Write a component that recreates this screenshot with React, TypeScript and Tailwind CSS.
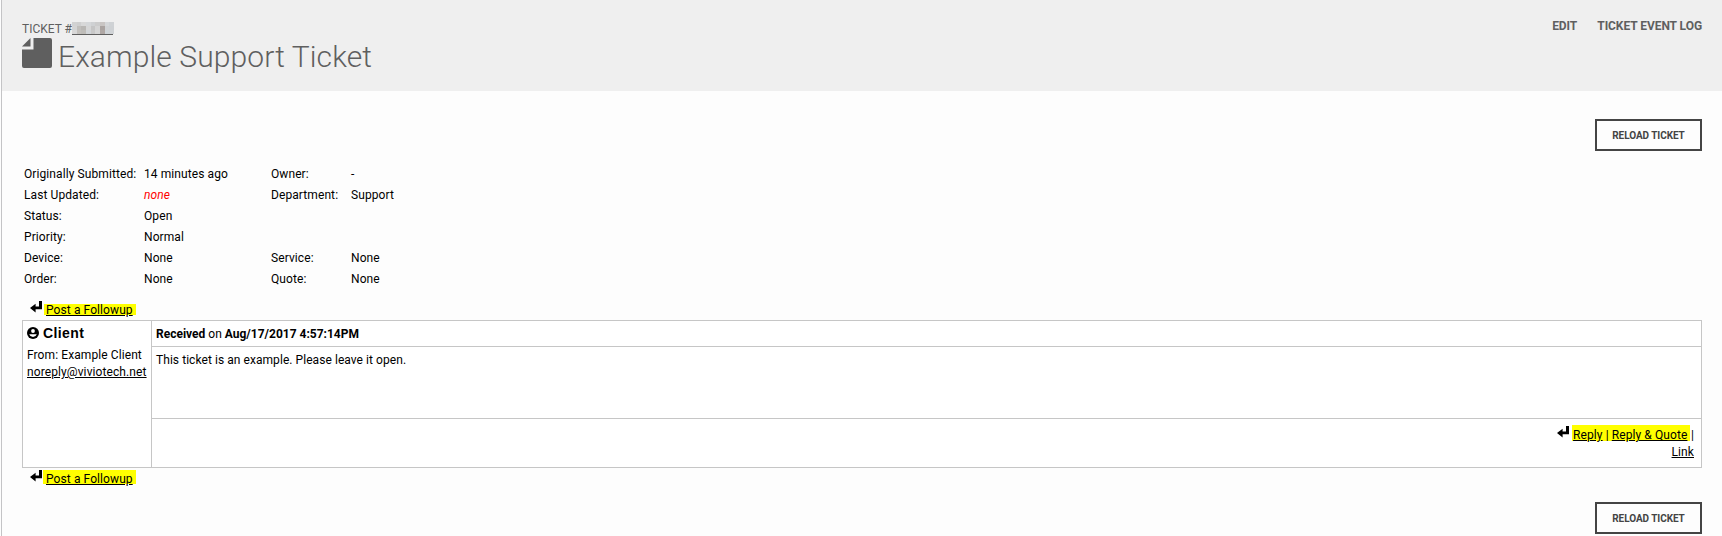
import React from "react";

const cells = [
  ["#d2d2d2", "#cfcfcf", "#d8d8d8", "#d5d7d9", "#cfd1d3", "#cccccc", "#c9c5c3", "#d5d7d9", "#cfd2d5"],
  ["#d4d4d4", "#c1bfbc", "#b9b7b4", "#d6d6d6", "#c5c5c5", "#d4d4d4", "#aaa3a0", "#d0d2d4", "#ced1d4"],
  ["#d8d8d8", "#c4c1bd", "#bfbdb9", "#d2d5d8", "#c9c9c9", "#d6d6d6", "#b0a8a5", "#cfd4d8", "#d0d3d6"],
];

const Arrow = ({ className }: { className: string }) => (
  <svg viewBox="0 0 12 12" className={`h-3 w-3 shrink-0 ${className}`} fill="#000">
    <path d="M9 0H12V8.3H5.6V11.4L0 7L5.6 2.8V5.6H9Z" />
  </svg>
);

const Reload = () => (
  <button className="flex h-8 w-[107px] items-center justify-center border-2 border-[#444] pt-px text-[10px] font-bold tracking-[-0.06px] whitespace-nowrap text-[#444]">
    RELOAD TICKET
  </button>
);

const details = [
  ["Originally Submitted:", "14 minutes ago", "Owner:", "-"],
  ["Last Updated:", "none", "Department:", "Support"],
  ["Status:", "Open", "", ""],
  ["Priority:", "Normal", "", ""],
  ["Device:", "None", "Service:", "None"],
  ["Order:", "None", "Quote:", "None"],
];

export default function App() {
  return (
    <div className="h-[536px] w-[1722px] overflow-hidden bg-[#fdfdfd] pl-px font-['Roboto',sans-serif] text-[12px] leading-[17px] text-black">
      <div className="h-full border-l border-[#c4c4c6]">
        <header className="flex h-[91px] justify-between bg-[#efefef] pr-5 pl-5 text-[#5f5f5f]">
          <div>
            <div className="flex h-[38px] items-start pt-5">
              <span className="w-[50px] pt-px whitespace-nowrap">TICKET #</span>
              <span className="mt-0.5 flex flex-col">
                {cells.map((row, i) => (
                  <span key={i} className="flex">
                    {row.map((c, j) => (
                      <span key={j} className="h-1 w-[4.67px]" style={{ background: c }} />
                    ))}
                  </span>
                ))}
                <span className="h-px w-[41px] bg-[#5f5f5f]" />
              </span>
            </div>
            <div className="flex">
              <svg viewBox="0 0 30 30" className="h-[30px] w-[30px]" fill="#5f5f5f">
                <path d="M11.5 0H28Q30 0 30 2V28Q30 30 28 30H2Q0 30 0 28V11.5H11.5Z" />
                <path d="M8.5 0V8.5H0Z" />
              </svg>
              <h1 className="ml-1.5 pt-px text-[30px] leading-9 font-light tracking-[0.1px] whitespace-nowrap">
                Example Support Ticket
              </h1>
            </div>
          </div>
          <nav className="flex gap-5 pt-[18px] text-[12px] font-bold tracking-[-0.06px]">
            <span>EDIT</span>
            <span>TICKET EVENT LOG</span>
          </nav>
        </header>

        <main className="px-5 pt-7">
          <div className="flex justify-end">
            <Reload />
          </div>
          <div className="mt-[13px] grid grid-cols-[120px_127px_80px_auto] pl-0.5 tracking-[0.09px]">
            {details.flatMap((row, i) =>
              row.map((t, j) => (
                <div
                  key={`${i}-${j}`}
                  className={
                    t === "none"
                      ? "h-[21px] leading-[21px] whitespace-nowrap text-[#ff0000] italic"
                      : "h-[21px] leading-[21px] whitespace-nowrap"
                  }
                >
                  {t}
                </div>
              ))
            )}
          </div>
          <div className="flex h-[30px] items-start pt-[11px] pl-2">
            <Arrow className="" />
            <span className="mt-[3px] ml-0.5 flex h-[11px] w-[92px] items-center bg-[#ffff00] pt-0.5 pl-0.5 whitespace-nowrap">
              <span className="tracking-[0.09px] underline">Post a Followup</span>
            </span>
          </div>
          <section className="flex h-[148px] w-[1680px] border border-[#c6c6c6] bg-white">
            <div className="w-[129px] border-r border-[#c6c6c6] pt-1 pl-1">
              <div className="flex items-center">
                <svg viewBox="0 0 12 12" className="-mt-px h-3 w-3">
                  <circle cx="6" cy="6" r="6" />
                  <circle cx="6" cy="4" r="1.9" fill="#fff" />
                  <path d="M2.2 7.2H9.8Q8.8 10 6 10T2.2 7.2Z" fill="#fff" />
                </svg>
                <b className="ml-1 font-['Liberation_Sans',sans-serif] text-[14px] tracking-[0.4px]">Client</b>
              </div>
              <div className="mt-[5px] tracking-[0.09px] whitespace-nowrap">From: Example Client</div>
              <div className="tracking-[0.1px] whitespace-nowrap underline">noreply@viviotech.net</div>
            </div>
            <div className="flex flex-1 flex-col">
              <div className="h-[26px] border-b border-[#c6c6c6] pt-[5px] pl-1">
                <b>Received</b> on <b>Aug/17/2017 4:57:14PM</b>
              </div>
              <div className="h-[72px] border-b border-[#c6c6c6] pt-[5px] pl-1 tracking-[0.06px]">
                This ticket is an example. Please leave it open.
              </div>
              <div className="flex flex-col items-end pt-1.5 pr-[7px]">
                <div className="flex h-[19px] whitespace-nowrap">
                  <Arrow className="mt-px" />
                  <span className="mr-px ml-[3px] h-4 w-[118px] bg-[#ffff00] pt-0.5 pl-px tracking-[0.09px]">
                    <span className="underline">Reply</span> | <span className="underline">Reply &amp; Quote</span>
                  </span>
                  <span className="pt-0.5">|</span>
                </div>
                <span className="tracking-[0.09px] underline">Link</span>
              </div>
            </div>
          </section>
          <div className="flex h-[34px] items-start pt-0.5 pl-2">
            <Arrow className="" />
            <span className="ml-px h-3.5 w-[93px] bg-[#ffff00] pt-px pl-[3px] whitespace-nowrap">
              <span className="tracking-[0.09px] underline">Post a Followup</span>
            </span>
          </div>
          <div className="flex justify-end">
            <Reload />
          </div>
        </main>
      </div>
    </div>
  );
}
